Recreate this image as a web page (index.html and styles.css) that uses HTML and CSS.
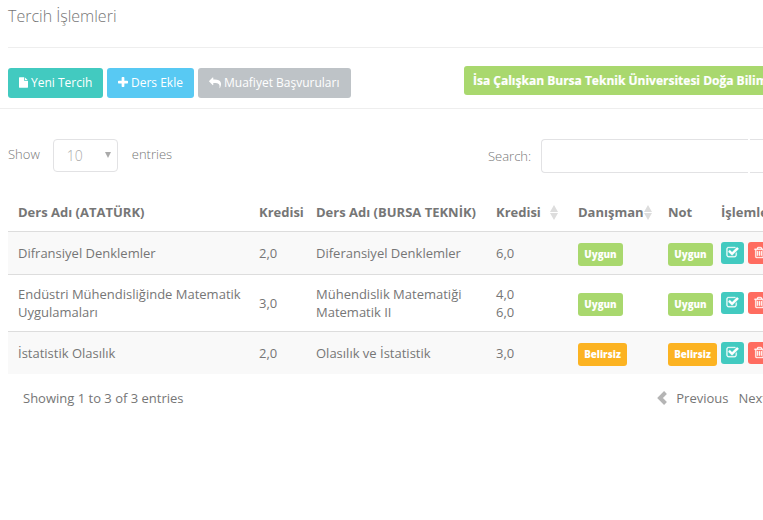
FILE: index.html
```html
<!DOCTYPE html>
<html lang="tr">
<head>
<meta charset="utf-8">
<title>Tercih İşlemleri</title>
<link rel="stylesheet" href="styles.css">
</head>
<body>
<svg class="defs" aria-hidden="true">
<symbol id="check" viewBox="0 0 1792 1792"><path d="M1472 930v318q0 119-84.500 203.500t-203.500 84.500h-832q-119 0-203.500-84.500t-84.500-203.500v-832q0-119 84.500-203.500t203.500-84.500h832q63 0 117 25 15 7 18 23 3 17-9 29l-49 49q-10 10-23 10-3 0-9-2-23-6-45-6h-832q-66 0-113 47t-47 113v832q0 66 47 113t113 47h832q66 0 113-47t47-113v-254q0-13 9-22l64-64q10-10 23-10 6 0 12 3 20 8 20 29zm231-489l-814 814q-24 24-57 24t-57-24l-430-430q-24-24-24-57t24-57l110-110q24-24 57-24t57 24l263 263 647-647q24-24 57-24t57 24l110 110q24 24 24 57t-24 57z"/></symbol>
<symbol id="trash" viewBox="0 0 1792 1792"><path d="M704 736v576q0 14-9 23t-23 9h-64q-14 0-23-9t-9-23v-576q0-14 9-23t23-9h64q14 0 23 9t9 23zm256 0v576q0 14-9 23t-23 9h-64q-14 0-23-9t-9-23v-576q0-14 9-23t23-9h64q14 0 23 9t9 23zm256 0v576q0 14-9 23t-23 9h-64q-14 0-23-9t-9-23v-576q0-14 9-23t23-9h64q14 0 23 9t9 23zm128 724v-948h-896v948q0 22 7 40.500t14.500 27 10.500 8.500h832q3 0 10.500-8.500t14.500-27 7-40.500zm-672-1076h448l-48-117q-7-9-17-11h-317q-10 2-17 11zm928 32v64q0 14-9 23t-23 9h-96v948q0 83-47 143.500t-113 60.500h-832q-66 0-113-58.500t-47-141.500v-952h-96q-14 0-23-9t-9-23v-64q0-14 9-23t23-9h309l70-167q15-37 54-63t79-26h320q40 0 79 26t54 63l70 167h309q14 0 23 9t9 23z"/></symbol>
<symbol id="sort" viewBox="0 0 8 15"><path d="M4 0L8 7H0zM0 8h8L4 15z"/></symbol>
</svg>
<div class="page">
  <h3 class="title">Tercih İşlemleri</h3>
  <div class="toolbar">
    <button class="btn teal"><svg class="file" viewBox="128 0 1536 1792"><path d="M1152 512v-472q22 14 36 28l408 408q14 14 28 36h-472zm-128 32q0 40 28 68t68 28h544v1056q0 40-28 68t-68 28h-1344q-40 0-68-28t-28-68v-1600q0-40 28-68t68-28h800v544z"/></svg>Yeni Tercih</button>
    <button class="btn blue"><svg class="plus" viewBox="192 0 1408 1792"><path d="M1600 736v192q0 40-28 68t-68 28h-416v416q0 40-28 68t-68 28h-192q-40 0-68-28t-28-68v-416h-416q-40 0-68-28t-28-68v-192q0-40 28-68t68-28h416v-416q0-40 28-68t68-28h192q40 0 68 28t28 68v416h416q40 0 68 28t28 68z"/></svg>Ders Ekle</button>
    <button class="btn gray"><svg class="reply" viewBox="0 0 1792 1792"><path d="M1792 640q0 26-19 45l-512 512q-19 19-45 19t-45-19-19-45v-256h-224q-98 0-175.500 6t-154 21.500-133 42.500-105.500 69.500-80 101-48.500 138.500-17.500 181q0 55 5 123 0 6 2.500 23.500t2.500 26.500q0 15-8.500 25t-23.500 10q-16 0-28-17-7-9-13-22t-13.500-30-10.500-24q-127-285-127-451 0-199 53-333 162-403 875-403h224v-256q0-26 19-45t45-19 45 19l512 512q19 19 19 45z"/></svg>Muafiyet Başvuruları</button>
    <span class="student">İsa Çalışkan Bursa Teknik Üniversitesi Doğa Bilimleri</span>
  </div>
  <div class="controls">
    <span class="word">Show</span>
    <span class="select">10<svg viewBox="0 0 6 6"><path d="M0 0h6L3 6z"/></svg></span>
    <span class="word">entries</span>
    <label class="search">Search:<span class="field"><i class="input"></i><i class="addon"></i></span></label>
  </div>
  <table>
    <colgroup><col class="c1"><col class="c2"><col class="c3"><col class="c4"><col class="c5"><col class="c6"><col class="c7"></colgroup>
    <thead><tr><th>Ders Adı (ATATÜRK)</th><th>Kredisi</th><th>Ders Adı (BURSA TEKNİK)</th><th><div class="sortable">Kredisi<svg><use href="#sort"/></svg></div></th><th><div class="sortable">Danışman<svg><use href="#sort"/></svg></div></th><th>Not</th><th>İşlemler</th></tr></thead>
    <tbody>
      <tr><td>Difransiyel Denklemler</td><td>2,0</td><td>Diferansiyel Denklemler</td><td>6,0</td><td><span class="label">Uygun</span></td><td><span class="label">Uygun</span></td><td><div class="actions"><b class="teal"><svg><use href="#check"/></svg></b><b class="red"><svg><use href="#trash"/></svg></b></div></td></tr>
      <tr><td>Endüstri Mühendisliğinde Matematik Uygulamaları</td><td>3,0</td><td>Mühendislik Matematiği<br>Matematik II</td><td>4,0<br>6,0</td><td><span class="label">Uygun</span></td><td><span class="label">Uygun</span></td><td><div class="actions"><b class="teal"><svg><use href="#check"/></svg></b><b class="red"><svg><use href="#trash"/></svg></b></div></td></tr>
      <tr><td>İstatistik Olasılık</td><td>2,0</td><td>Olasılık ve İstatistik</td><td>3,0</td><td><span class="label warn">Belirsiz</span></td><td><span class="label warn">Belirsiz</span></td><td><div class="actions"><b class="teal"><svg><use href="#check"/></svg></b><b class="red"><svg><use href="#trash"/></svg></b></div></td></tr>
    </tbody>
  </table>
  <div class="footer">
    <span>Showing 1 to 3 of 3 entries</span>
    <div class="pager"><svg viewBox="0 0 10 14"><path d="M8.500 1.500L3 7l5.500 5.500" /></svg><span>Previous</span><span>Next</span></div>
  </div>
</div>
</body>
</html>
```
FILE: styles.css
```css
* { box-sizing: border-box; }
html { overflow: hidden; }
body { margin: 0; overflow: hidden; background: #fff; color: #767676; font: 13px/18px "Open Sans", sans-serif; }
svg { fill: currentColor; flex: none; }
.defs { display: none; }
.page { width: 840px; height: 520px; }
.title { height: 48px; margin: 0 0 0 8px; padding-top: 5px; border-bottom: 1px solid #eee; font-size: 16px; font-weight: 300; line-height: 22px; }
.toolbar { display: flex; align-items: flex-start; gap: 4px; height: 61px; padding: 20px 0 0 8px; border-bottom: 1px solid #eee; }
.btn { display: flex; flex: none; align-items: center; gap: 3px; height: 30px; padding: 0 0 1px 11px; border: 0; border-radius: 3px; color: #fff; font: 12px/18px "Open Sans", sans-serif; white-space: nowrap; }
.btn.teal { width: 95px; }
.btn.blue { width: 87px; }
.btn.gray { width: 153px; }
.teal { background: #42cac0; }
.blue { background: #58c9f3; }
.gray { background: #bec3c7; }
.red { background: #ff6c60; }
.file { width: 9px; height: 11px; }
.plus { width: 10px; height: 13px; }
.reply { width: 12px; height: 12px; transform: scaleX(-1); }
.student { flex: none; width: 400px; height: 29px; margin: -2px 0 0 109px; padding: 0 9px; border-radius: 3px; background: #a9d86e; color: #fff; font-size: 12px; font-weight: 700; line-height: 29px; white-space: nowrap; -webkit-text-stroke: 0.2px #fff; }
.controls { display: flex; align-items: center; height: 34px; margin: 30px 0 0 8px; font-weight: 300; }
.word { padding-bottom: 4px; }
.select { display: flex; align-items: center; justify-content: space-between; width: 65px; height: 33px; margin: 0 14px 1px 13px; padding: 0 6px 0 13px; border: 1px solid #e2e2e4; border-radius: 4px; color: #aaa; font-size: 14px; }
.select svg { width: 6px; height: 6px; margin-bottom: 2px; }
.search { display: flex; align-items: center; margin-left: auto; width: 352px; }
.field { display: flex; gap: 2px; margin-left: 10px; }
.field i { height: 34px; border: 1px solid #e2e2e4; }
.input { width: 207px; border-right: 0 !important; border-radius: 4px 0 0 4px; }
.addon { width: 80px; border-left: 0 !important; }
table { width: 790px; margin: 20px 0 0 8px; border-collapse: separate; border-spacing: 0; table-layout: fixed; }
.c1 { width: 241px; }
.c2 { width: 57px; }
.c3 { width: 180px; }
.c4 { width: 82px; }
.c5 { width: 90px; }
.c6 { width: 53px; }
th { height: 39px; padding: 0 0 0 10px; border-bottom: 1px solid #ddd; text-align: left; white-space: nowrap; font-weight: 700; }
td { height: 43px; padding: 0 0 0 10px; border-bottom: 1px solid #ddd; vertical-align: middle; }
tr:nth-child(2) td { height: 57px; }
tbody tr:last-child td { height: 42px; border: 0; }
tbody tr:nth-child(odd) { background: #f9f9f9; }
.sortable { display: flex; justify-content: space-between; align-items: center; padding-right: 10px; }
.sortable svg { width: 8px; height: 15px; color: #ddd; }
th:nth-child(5) .sortable { padding-right: 6px; }
.label { display: block; width: 45px; height: 23px; margin-top: 2px; border-radius: 3px; background: #a9d86e; color: #fff; font-size: 9.75px; font-weight: 800; line-height: 24px; text-align: center; }
.warn { width: 49px; background: #fcb322; }
.actions { display: flex; gap: 4px; }
.actions b { display: flex; align-items: center; justify-content: center; width: 23px; height: 22px; padding-bottom: 1px; border-radius: 3px; color: #fff; }
.actions svg { width: 13px; height: 13px; stroke: #fff; stroke-width: 40; }
.footer { display: flex; justify-content: space-between; align-items: center; height: 18px; margin: 15px 77px 0 23px; }
.pager { display: flex; align-items: center; gap: 10px; margin-right: -4px; }
.pager svg { width: 10px; height: 14px; margin-right: -1px; fill: none; stroke: #b5b5b5; stroke-width: 4; }
```
